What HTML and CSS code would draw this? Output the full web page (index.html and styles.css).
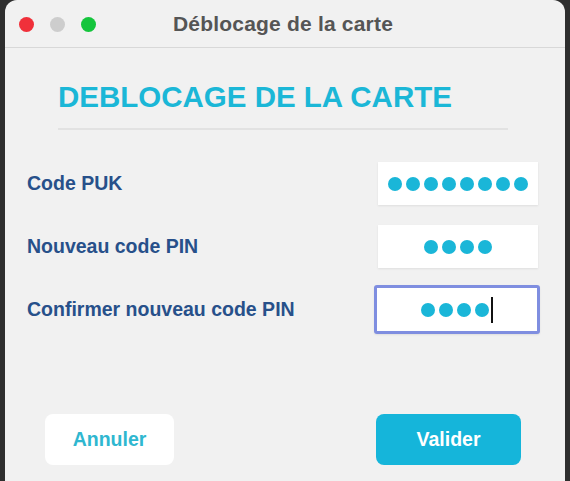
FILE: index.html
```html
<!DOCTYPE html>
<html lang="fr">
  <head>
    <meta charset="UTF-8" />
    <title>Déblocage de la carte</title>
    <link rel="stylesheet" href="styles.css">
  </head>
  <body>
    <div class="window">
      <div class="titlebar">
        <div class="lights">
          <span class="light red"></span>
          <span class="light grey"></span>
          <span class="light green"></span>
        </div>
        <div class="title">Déblocage de la carte</div>
      </div>

      <div class="content">
        <h1>DEBLOCAGE DE LA CARTE</h1>
        <div class="separator"></div>

        <div class="form">
          <div class="row">
            <label>Code PUK</label>
            <div class="field">
              <span class="dot"></span><span class="dot"></span><span class="dot"></span><span class="dot"></span>
              <span class="dot"></span><span class="dot"></span><span class="dot"></span><span class="dot"></span>
            </div>
          </div>
          <div class="row">
            <label>Nouveau code PIN</label>
            <div class="field">
              <span class="dot"></span><span class="dot"></span><span class="dot"></span><span class="dot"></span>
            </div>
          </div>
          <div class="row">
            <label>Confirmer nouveau code PIN</label>
            <div class="field focused">
              <span class="dot"></span><span class="dot"></span><span class="dot"></span><span class="dot"></span>
              <span class="caret"></span>
            </div>
          </div>
        </div>

        <div class="actions">
          <button class="btn cancel">Annuler</button>
          <button class="btn primary">Valider</button>
        </div>
      </div>
    </div>
  </body>
</html>
```

FILE: styles.css
```css
html,
body {
  margin: 0;
  height: 100%;
}
body {
  background-color: #2e2e2e;
  font-family: "Liberation Sans", Arial, sans-serif;
  overflow: hidden;
}
.window {
  margin: 0 5px;
  height: 481px;
  background-color: #f1f1f1;
  border-radius: 12px 12px 0 0;
  display: flex;
  flex-direction: column;
}
.titlebar {
  position: relative;
  height: 47px;
  border-bottom: 1px solid #d8d8d8;
  display: flex;
  align-items: center;
  justify-content: center;
  flex-shrink: 0;
}
.lights {
  position: absolute;
  left: 14px;
  top: 17px;
  display: flex;
  gap: 16px;
}
.light {
  width: 15px;
  height: 15px;
  border-radius: 50%;
}
.light.red {
  background-color: #f0303a;
}
.light.grey {
  background-color: #cdcdcd;
}
.light.green {
  background-color: #14c53c;
}
.title {
  font-size: 21px;
  letter-spacing: 0.2px;
  font-weight: bold;
  color: #555;
  margin-left: -4px;
}
.content {
  flex: 1;
  padding: 0 27px 0 22px;
  display: flex;
  flex-direction: column;
}
h1 {
  margin: 32px 0 0 31px;
  font-size: 29.5px;
  line-height: 34px;
  font-weight: bold;
  color: #1bb7d7;
}
.separator {
  margin: 14px 30px 0 31px;
  height: 2px;
  background-color: #e2e2e2;
}
.form {
  margin-top: 32px;
  display: flex;
  flex-direction: column;
  gap: 20px;
}
.row {
  display: flex;
  align-items: center;
  justify-content: space-between;
  height: 43px;
}
label {
  font-size: 19.5px;
  font-weight: bold;
  color: #27508a;
}
.field {
  width: 160px;
  height: 43px;
  box-sizing: border-box;
  background-color: #fff;
  display: flex;
  align-items: center;
  justify-content: center;
  gap: 4px;
  box-shadow: 0 1px 2px rgba(0, 0, 0, 0.08);
}
.field.focused {
  width: 166px;
  height: 49px;
  margin-right: -2px;
  border: 3px solid #7f8ee0;
  border-radius: 3px;
}
.dot {
  width: 14px;
  height: 14px;
  border-radius: 50%;
  background-color: #1ab6d8;
}
.caret {
  width: 2px;
  height: 26px;
  background-color: #111;
  margin-left: -2px;
}
.actions {
  margin-top: auto;
  margin-bottom: 16px;
  padding: 0 17px 0 18px;
  display: flex;
  justify-content: space-between;
}
.btn {
  height: 51px;
  border: none;
  border-radius: 8px;
  font-family: "Liberation Sans", Arial, sans-serif;
  font-size: 19.5px;
  font-weight: bold;
  cursor: pointer;
}
.btn.cancel {
  width: 129px;
  background-color: #fff;
  color: #2fb7d0;
}
.btn.primary {
  width: 145px;
  background-color: #15b5da;
  color: #fff;
}
```
